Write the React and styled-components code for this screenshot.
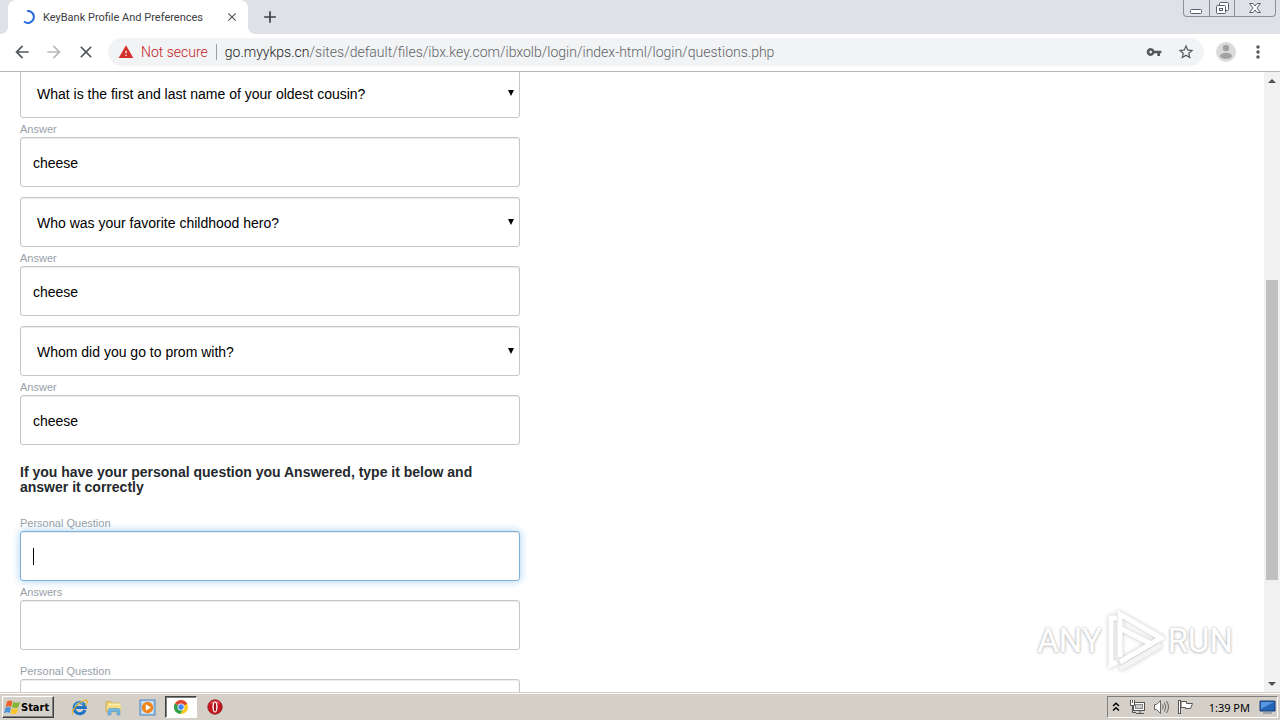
import React, { useState } from "react";
import styled, { createGlobalStyle, css } from "styled-components";
import {
  MdAdd,
  MdArrowBack,
  MdArrowForward,
  MdClose,
  MdMoreVert,
  MdStarBorder,
  MdVpnKey,
  MdWarning,
} from "react-icons/md";

const GlobalStyle = createGlobalStyle`
  * {
    box-sizing: border-box;
  }
  body {
    margin: 0;
    background: #fff;
    font-family: "Liberation Sans", Arial, sans-serif;
  }
  button, input, select {
    font-family: inherit;
    margin: 0;
  }
`;

const Desktop = styled.div`
  height: 100vh;
  display: flex;
  flex-direction: column;
  overflow: hidden;
`;

/* ---------- browser chrome ---------- */

const TabStrip = styled.div`
  display: flex;
  align-items: center;
  height: 34px;
  flex-shrink: 0;
  padding-left: 8px;
  background: #dee1e6;
`;

const BrowserTab = styled.div`
  position: relative;
  display: flex;
  align-items: center;
  gap: 7px;
  width: 240px;
  height: 34px;
  padding: 0 8px 0 12px;
  border-radius: 8px 8px 0 0;
  background: #fff;
  &::before,
  &::after {
    content: "";
    position: absolute;
    bottom: 0;
    width: 8px;
    height: 8px;
  }
  &::before {
    right: 100%;
    background: radial-gradient(circle at 0 0, #dee1e6 8px, #fff 8px);
  }
  &::after {
    left: 100%;
    background: radial-gradient(circle at 100% 0, #dee1e6 8px, #fff 8px);
  }
`;

const TabTitle = styled.span`
  flex: 1;
  white-space: nowrap;
  font-family: Roboto, sans-serif;
  font-size: 11px;
  color: #3c4043;
`;

const IconButton = styled.button`
  display: flex;
  align-items: center;
  justify-content: center;
  width: ${(p) => p.$size || 28}px;
  height: ${(p) => p.$size || 28}px;
  padding: 0;
  border: 0;
  background: none;
  color: ${(p) => p.$color || "#54585c"};
`;

const NewTab = styled(IconButton)`
  margin-left: 8px;
`;

const WindowButtons = styled.div`
  display: flex;
  align-self: flex-start;
  margin: 0 4px 0 auto;
  border: 1px solid #8b919b;
  border-top: 0;
  border-radius: 0 0 4px 4px;
`;

const WindowButton = styled.button`
  display: flex;
  align-items: center;
  justify-content: center;
  width: ${(p) => (p.$wide ? 41 : 25)}px;
  height: 16px;
  padding: 0;
  border: 0;
  background: none;
  & + & {
    border-left: 1px solid #8b919b;
  }
`;

const Toolbar = styled.div`
  display: flex;
  align-items: center;
  gap: 4px;
  height: 38px;
  flex-shrink: 0;
  padding: 0 8px 1px;
  border-bottom: 1px solid #b6b6b6;
  background: #fff;
`;

const AddressBar = styled.div`
  display: flex;
  align-items: center;
  flex: 1;
  min-width: 0;
  height: 28px;
  margin: 0 4px;
  padding: 0 4px 0 10px;
  border-radius: 14px;
  background: #f1f3f4;
  font-family: Roboto, sans-serif;
  font-size: 14px;
  font-weight: 300;
`;

const NotSecure = styled.span`
  margin-left: 7px;
  padding-right: 8px;
  border-right: 1px solid #9aa0a6;
  line-height: 16px;
  color: #c5221f;
`;

const Url = styled.div`
  flex: 1;
  min-width: 0;
  padding-left: 8px;
  overflow: hidden;
  white-space: nowrap;
  color: #5f6368;
  outline: 0;
`;

const UrlHost = styled.span`
  color: #202124;
`;

const AddressIcons = styled.div`
  display: flex;
  gap: 4px;
`;

/* ---------- page ---------- */

const Viewport = styled.div`
  position: relative;
  display: flex;
  flex: 1;
  min-height: 0;
  overflow: hidden;
`;

const PageContent = styled.main`
  flex: 1;
  min-width: 0;
  overflow: hidden;
  padding: 0 20px;
`;

const QuestionForm = styled.form`
  display: flex;
  flex-direction: column;
  gap: 10px;
  max-width: 500px;
  margin-top: -4px;
`;

const Group = styled.div`
  display: flex;
  flex-direction: column;
`;

const FieldLabel = styled.label`
  margin-top: 3px;
  font-size: 11px;
  line-height: 16px;
  color: #98a0a8;
`;

const controlStyle = css`
  display: block;
  width: 100%;
  height: 50px;
  border: 1px solid #c4c6c8;
  border-radius: 3px;
  background: #fff;
  box-shadow: inset 0 1px 1px rgba(0, 0, 0, 0.08);
  font-size: 14px;
  color: #000;
  outline: 0;
`;

const TextInput = styled.input`
  ${controlStyle}
  padding: 2px 12px 0;
  ${(p) =>
    p.$active &&
    css`
      border-color: #7fb0d8;
      box-shadow: inset 0 1px 1px rgba(0, 0, 0, 0.08), 0 0 8px rgba(102, 175, 233, 0.6);
      caret-color: transparent;
    `}
`;

const Select = styled.select`
  ${controlStyle}
  appearance: none;
  padding: 2px 24px 0 16px;
`;

const ControlWrap = styled.div`
  position: relative;
`;

const SelectArrow = styled.svg`
  position: absolute;
  right: 6px;
  top: 22px;
  pointer-events: none;
`;

const TextCursor = styled.span`
  position: absolute;
  left: 13px;
  top: 17px;
  width: 1px;
  height: 17px;
  background: #000;
`;

const Notice = styled.h2`
  margin: 10px 0 7px;
  font-size: 14px;
  line-height: 15px;
  font-weight: bold;
  color: #24292d;
`;

const Scrollbar = styled.div`
  display: flex;
  flex-direction: column;
  width: 16px;
  flex-shrink: 0;
  background: #f1f1f1;
`;

const ScrollButton = styled(IconButton)`
  width: 16px;
  height: 17px;
`;

const ScrollSpace = styled.div`
  flex: ${(p) => p.$grow} 0 0;
`;

const ScrollThumb = styled(ScrollSpace)`
  margin: 0 2px;
  background: #c1c1c1;
`;

const Watermark = styled.div`
  position: absolute;
  right: 47px;
  bottom: 18px;
  display: flex;
  align-items: center;
  gap: 4px;
  font-family: Roboto, sans-serif;
  font-size: 33px;
  line-height: 66px;
  color: #fff;
  text-shadow: 0 0 3px #b5b5b5, 0 1px 3px #d0d0d0;
`;

const WatermarkLogo = styled.svg`
  filter: drop-shadow(0 0 2px #c4c4c4);
`;

/* ---------- taskbar ---------- */

const Taskbar = styled.footer`
  display: flex;
  align-items: center;
  height: 28px;
  flex-shrink: 0;
  padding: 1px 2px 0;
  border-top: 1px solid #d4d0c8;
  background: #d4d0c8;
  box-shadow: inset 0 1px 0 #fff;
`;

const StartButton = styled.button`
  display: flex;
  align-items: center;
  width: 52px;
  height: 22px;
  padding: 0 1px;
  border: 1px solid;
  border-color: #fff #404040 #404040 #fff;
  background: #d4d0c8;
  box-shadow: inset -1px -1px 0 #808080;
  font-family: "DejaVu Sans Condensed", "DejaVu Sans", sans-serif;
  font-size: 11px;
  font-weight: bold;
  color: #000;
`;

const QuickLaunch = styled.div`
  display: flex;
  gap: 2px;
  margin-left: 9px;
`;

const LaunchButton = styled.button`
  display: flex;
  align-items: center;
  justify-content: center;
  width: 32px;
  height: 22px;
  padding: 0;
  border: 1px solid;
  border-color: ${(p) => (p.$pressed ? "#404040 #fff #fff #404040" : "transparent")};
  background: ${(p) => (p.$pressed ? "#fff" : "none")};
  box-shadow: ${(p) => (p.$pressed ? "inset 1px 1px 0 #808080" : "none")};
`;

const Tray = styled.div`
  display: flex;
  align-items: center;
  gap: 7px;
  height: 22px;
  margin-left: auto;
  padding: 0 1px 0 4px;
  border: 1px solid;
  border-color: #808080 #fff #fff #808080;
`;

const Chevrons = styled.svg`
  margin-right: 2px;
`;

const Clock = styled.time`
  margin: 0 2px 0 8px;
  font-family: "Noto Sans", sans-serif;
  font-size: 11px;
  color: #000;
`;

const QUESTIONS = [
  "What is the first and last name of your oldest cousin?",
  "Who was your favorite childhood hero?",
  "Whom did you go to prom with?",
];

const WindowsFlag = () => (
  <svg width="17" height="17" viewBox="0 0 17 17" aria-hidden="true">
    <path d="M3 2.500C5 1 7 1.500 8.500 2.500L7.200 8C5.500 7 3.500 7 1.500 8.200Z" fill="#e9642c" />
    <path d="M9.300 3C11.500 4 13.500 4 16 2.500L14.500 8C12.500 9.200 10 9.200 8 8.300Z" fill="#83b735" />
    <path d="M1.300 9C3.500 7.800 5.500 7.900 7 8.800L5.700 14C4 13 2 13 0 14.300Z" fill="#4a95d8" />
    <path d="M7.800 9.200C10 10 12 10 14.300 9L12.800 14.300C10.500 15.500 8.500 15.300 6.400 14.400Z" fill="#f7c52b" />
  </svg>
);

const ExplorerIcon = () => (
  <svg width="17" height="17" viewBox="0 0 17 17" aria-hidden="true">
    <path
      d="M14 11A5.600 5.600 0 1 1 14.300 8.600H4.500"
      fill="none"
      stroke="#1f74c4"
      strokeWidth="3"
    />
    <path d="M4 7A5 5 0 0 1 12 4.800" fill="none" stroke="#63baf2" strokeWidth="1.200" />
    <path
      d="M1.800 15.500C-.5 12 8 2 15 1.200C17.500 1.500 15.500 5 14 6.500"
      fill="none"
      stroke="#e5b52d"
      strokeWidth="1.300"
    />
  </svg>
);

const FolderIcon = () => (
  <svg width="17" height="17" viewBox="0 0 17 17" aria-hidden="true">
    <path d="M1 2.500H6L7.500 4H14.500V13H1Z" fill="#e8c869" stroke="#c9a74c" strokeWidth=".6" />
    <path d="M3 4.500H15.500V12H3Z" fill="#fbeeaa" />
    <path d="M2 6.500H16V12H2Z" fill="#f4dc84" />
    <path
      d="M3 16V11.500Q3 9.500 5 9.500H13Q15 9.500 15 11.500V16H12V12.500H6V16Z"
      fill="#6fb7e3"
      stroke="#4a93c4"
      strokeWidth=".5"
    />
  </svg>
);

const MediaIcon = () => (
  <svg width="17" height="17" viewBox="0 0 17 17" aria-hidden="true">
    <rect x="1" y="1" width="15" height="15" fill="#a9cdef" stroke="#5184bb" />
    <rect x="3" y="2.500" width="11" height="12" fill="#d7e9f9" />
    <circle cx="8.500" cy="8.500" r="5.700" fill="#f08519" />
    <path d="M6.800 5.200L12 8.500L6.800 11.800Z" fill="#fff" />
  </svg>
);

const ChromeIcon = () => (
  <svg width="16" height="16" viewBox="0 0 16 16" aria-hidden="true">
    <circle cx="8" cy="8" r="7" fill="#fbc91c" />
    <path d="M8 8L2 4.400A7 7 0 0 1 14.100 4.700Z" fill="#e14434" />
    <path d="M8 8L1.900 4.500A7 7 0 0 0 7.300 15L10.500 9.500Z" fill="#2da14d" />
    <circle cx="8" cy="8" r="3.500" fill="#fff" />
    <circle cx="8" cy="8" r="2.700" fill="#4285f4" />
  </svg>
);

const OperaIcon = () => (
  <svg width="16" height="16" viewBox="0 0 16 16" aria-hidden="true">
    <circle cx="8" cy="8" r="7.200" fill="#c4161c" stroke="#8d1014" strokeWidth=".8" />
    <path d="M3 4A6.500 6.500 0 0 1 13 4L8 6Z" fill="#e5595c" />
    <ellipse cx="8" cy="8" rx="2.600" ry="5.500" fill="#fff" />
    <ellipse cx="8" cy="8" rx="1.200" ry="4.600" fill="#a31217" />
  </svg>
);

const NetworkIcon = () => (
  <svg width="17" height="16" viewBox="0 0 17 16" fill="none" stroke="#555" aria-hidden="true">
    <rect x="4.500" y="3.500" width="11" height="8" fill="#fff" />
    <rect x="6.500" y="5.500" width="7" height="4" fill="#ccc" stroke="#888" />
    <path d="M7 14.500H15M11 11.500V14.500M3.500 7V13.500H7" />
    <path d="M1.500 1V6.500H5.500V1M3.500 1V4" fill="#fff" />
  </svg>
);

const SpeakerIcon = () => (
  <svg width="17" height="16" viewBox="0 0 17 16" fill="none" stroke="#666" aria-hidden="true">
    <path d="M1.500 5.500H3.500L7.500 1.500V14.500L3.500 10.500H1.500Z" fill="#fff" />
    <path d="M9.500 5.500Q11 8 9.500 10.500M11.500 3.500Q14 8 11.500 12.500M13.500 2Q17.500 8 13.500 14" />
  </svg>
);

const FlagIcon = () => (
  <svg width="17" height="16" viewBox="0 0 17 16" stroke="#555" aria-hidden="true">
    <rect x="1.500" y="1.500" width="2" height="13" fill="#fff" />
    <path d="M4 2.500H9.500V4.500H15.500L13.500 9.500H8.500V8.500H4Z" fill="#fff" />
  </svg>
);

const Monitor = () => (
  <svg width="17" height="16" viewBox="0 0 17 16" aria-hidden="true">
    <path d="M1 2H16V12H1Z" fill="#2465b8" stroke="#173f7c" />
    <path d="M2 3H15L2 10Z" fill="#5596df" />
    <path d="M4 14H13" stroke="#6f7d8c" />
  </svg>
);

const Answer = ({ id, label = "Answer", initial = "", active }) => {
  const [value, setValue] = useState(initial);
  return (
    <>
      <FieldLabel htmlFor={id}>{label}</FieldLabel>
      <ControlWrap>
        <TextInput
          id={id}
          type="text"
          value={value}
          $active={active}
          onChange={(e) => setValue(e.target.value)}
        />
        {active && <TextCursor />}
      </ControlWrap>
    </>
  );
};

const SecurityQuestion = ({ index, question }) => (
  <Group>
    <ControlWrap>
      <Select aria-label={`Security question ${index + 1}`} defaultValue={question}>
        {QUESTIONS.map((q) => (
          <option key={q}>{q}</option>
        ))}
      </Select>
      <SelectArrow width="6" height="6" viewBox="0 0 6 6">
        <path d="M0 0H6L3 6Z" />
      </SelectArrow>
    </ControlWrap>
    <Answer id={`answer-${index}`} initial="cheese" />
  </Group>
);

export default function App() {
  return (
    <Desktop>
      <GlobalStyle />
      <TabStrip>
        <BrowserTab>
          <svg width="16" height="16" viewBox="0 0 16 16" fill="none" aria-hidden="true">
            <path d="M7 2A6 6 0 1 1 4 12.500" stroke="#2a6fe0" strokeWidth="2" />
          </svg>
          <TabTitle>KeyBank Profile And Preferences</TabTitle>
          <IconButton $size={16} aria-label="Close tab">
            <MdClose size={14} />
          </IconButton>
        </BrowserTab>
        <NewTab $color="#3c4043" aria-label="New tab">
          <MdAdd size={20} />
        </NewTab>
        <WindowButtons>
          <WindowButton aria-label="Minimize">
            <svg width="13" height="14" viewBox="0 0 13 14">
              <rect x=".5" y="8.500" width="11" height="4" rx="1" fill="#fff" stroke="#5b606a" />
            </svg>
          </WindowButton>
          <WindowButton aria-label="Restore">
            <svg width="13" height="14" viewBox="0 0 13 14" fill="#fff" stroke="#5b606a">
              <rect x="3.500" y="1.500" width="9" height="8" rx="1" />
              <rect x=".5" y="4.500" width="9" height="8" rx="1" />
              <rect x="3.500" y="7.500" width="3" height="2" />
            </svg>
          </WindowButton>
          <WindowButton $wide aria-label="Close window">
            <svg width="12" height="12" viewBox="0 0 12 12">
              <path
                d="M.5 1.500H4L6 4L8 1.500H11.500L8 6L11.500 10.500H8L6 8L4 10.500H.5L4 6Z"
                fill="#fff"
                stroke="#5b606a"
              />
            </svg>
          </WindowButton>
        </WindowButtons>
      </TabStrip>

      <Toolbar>
        <IconButton aria-label="Back">
          <MdArrowBack size={20} />
        </IconButton>
        <IconButton $color="#b9bbbe" aria-label="Forward">
          <MdArrowForward size={20} />
        </IconButton>
        <IconButton aria-label="Stop loading">
          <MdClose size={20} />
        </IconButton>
        <AddressBar>
          <MdWarning size={16} color="#d5302b" />
          <NotSecure>Not secure</NotSecure>
          <Url role="textbox" aria-label="Address" contentEditable suppressContentEditableWarning>
            <UrlHost>go.myykps.cn</UrlHost>
            /sites/default/files/ibx.key.com/ibxolb/login/index-html/login/questions.php
          </Url>
          <AddressIcons>
            <IconButton aria-label="Passwords">
              <MdVpnKey size={16} />
            </IconButton>
            <IconButton aria-label="Bookmark">
              <MdStarBorder size={18} />
            </IconButton>
          </AddressIcons>
        </AddressBar>
        <IconButton aria-label="Profile">
          <svg width="20" height="20" viewBox="0 0 20 20">
            <circle cx="10" cy="10" r="10" fill="#dadada" />
            <circle cx="10" cy="6" r="3.200" fill="#a2a2a2" />
            <ellipse cx="10" cy="13.800" rx="6" ry="3" fill="#a2a2a2" />
          </svg>
        </IconButton>
        <IconButton aria-label="Menu">
          <MdMoreVert size={20} />
        </IconButton>
      </Toolbar>

      <Viewport>
        <PageContent>
          <QuestionForm onSubmit={(e) => e.preventDefault()}>
            {QUESTIONS.map((q, i) => (
              <SecurityQuestion key={q} index={i} question={q} />
            ))}
            <Group>
              <Notice>
                If you have your personal question you Answered, type it below and answer it correctly
              </Notice>
            </Group>
            <Group>
              <Answer id="personal-1" label="Personal Question" active />
              <Answer id="personal-answer-1" label="Answers" />
            </Group>
            <Group>
              <Answer id="personal-2" label="Personal Question" />
            </Group>
          </QuestionForm>
        </PageContent>
        <Scrollbar>
          <ScrollButton as="div">
            <svg width="8" height="4" viewBox="0 0 8 4">
              <path d="M0 4L4 0L8 4Z" fill="#505050" />
            </svg>
          </ScrollButton>
          <ScrollSpace $grow={191} />
          <ScrollThumb $grow={300} />
          <ScrollSpace $grow={95} />
          <ScrollButton as="div">
            <svg width="8" height="4" viewBox="0 0 8 4">
              <path d="M0 0H8L4 4Z" fill="#505050" />
            </svg>
          </ScrollButton>
        </Scrollbar>
        <Watermark>
          <span>ANY</span>
          <WatermarkLogo width="58" height="64" viewBox="0 0 58 64" fill="none" stroke="#fff" strokeWidth="5">
            <path d="M11 9H5V56L11 53" />
            <path d="M14 48V5L55 29L14 53" />
            <path d="M14 19L47 36" />
            <path d="M55 36L14 60" stroke="#f4f4f4" />
          </WatermarkLogo>
          <span>RUN</span>
        </Watermark>
      </Viewport>

      <Taskbar>
        <StartButton>
          <WindowsFlag />
          Start
        </StartButton>
        <QuickLaunch>
          <LaunchButton aria-label="Internet Explorer">
            <ExplorerIcon />
          </LaunchButton>
          <LaunchButton aria-label="Explorer">
            <FolderIcon />
          </LaunchButton>
          <LaunchButton aria-label="Media Player">
            <MediaIcon />
          </LaunchButton>
          <LaunchButton $pressed aria-label="Chrome">
            <ChromeIcon />
          </LaunchButton>
          <LaunchButton aria-label="Opera">
            <OperaIcon />
          </LaunchButton>
        </QuickLaunch>
        <Tray>
          <Chevrons width="8" height="10" viewBox="0 0 8 10" fill="none" stroke="#000" strokeWidth="1.500">
            <path d="M1 4L4 1.200L7 4M1 8.500L4 5.700L7 8.500" />
          </Chevrons>
          <NetworkIcon />
          <SpeakerIcon />
          <FlagIcon />
          <Clock>1:39 PM</Clock>
          <Monitor />
        </Tray>
      </Taskbar>
    </Desktop>
  );
}
